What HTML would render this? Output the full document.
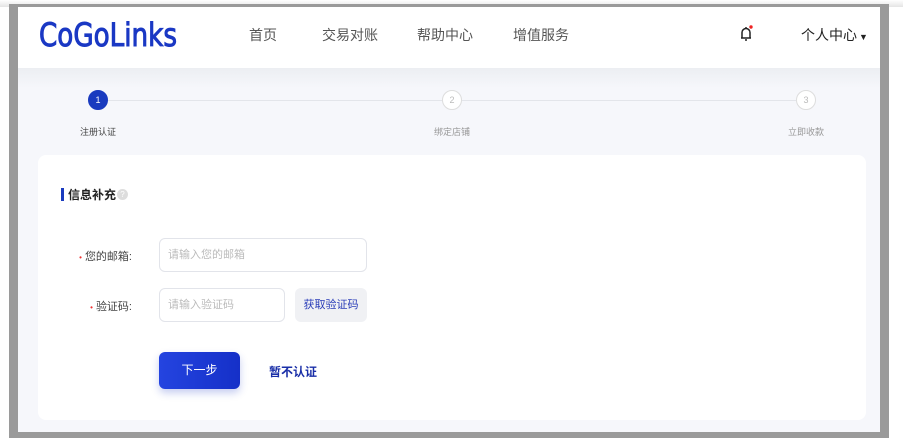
<!DOCTYPE html>
<html><head><meta charset="utf-8"><style>
*{margin:0;padding:0;box-sizing:border-box}
body{width:903px;height:442px;background:#fff;position:relative;overflow:hidden;font-family:"Liberation Sans","Noto Sans CJK SC",sans-serif}
.frame{position:absolute;left:9px;top:4px;width:880px;height:434px;background:#9a9a9a;}
.top{position:absolute;left:0;top:0;width:903px;height:7px;background:linear-gradient(#fff,#e4e4e4)}
.page{position:absolute;left:18px;top:7px;width:862px;height:425px;background:#f6f7fb;overflow:hidden}
.hdr{position:absolute;left:0;top:0;width:862px;height:61px;background:#fff}
.nav{position:absolute;top:18px;font-size:14px;color:#555}
.step{position:absolute;top:83px;width:20px;height:20px;border-radius:50%;font-size:9px;text-align:center;line-height:18px}
.lab{position:absolute;top:118px;font-size:9px;color:#999;width:80px;text-align:center}
.line{position:absolute;top:93px;height:1px;background:#e3e5ea}
.card{position:absolute;left:20px;top:148px;width:828px;height:265px;background:#fff;border-radius:8px}
.inp{position:absolute;border:1px solid #e2e4ea;border-radius:6px;background:#fff;font-size:11px;color:#bbb;padding-left:8px;line-height:32px;height:34px}
.fl{position:absolute;font-size:11px;color:#444;text-align:right;width:80px}
.fl b{color:#e33;font-weight:normal;font-size:8px;margin-right:3px}
</style></head><body>
<div class="top"></div>
<div class="frame"></div>
<div class="page">
 <div class="hdr">
  <svg style="position:absolute;left:20px;top:9px" width="142" height="36"><text x="1" y="30" font-family="DejaVu Sans" font-size="32" fill="#1a38c4" stroke="#1a38c4" stroke-width="1" textLength="138" lengthAdjust="spacingAndGlyphs">CoGoLinks</text></svg>
  <div class="nav" style="left:231px">首页</div>
  <div class="nav" style="left:304px">交易对账</div>
  <div class="nav" style="left:399px">帮助中心</div>
  <div class="nav" style="left:495px">增值服务</div>
  <svg style="position:absolute;left:721px;top:18px" width="14" height="17" viewBox="0 0 14 17"><path d="M3 13V7.5a4 4 0 0 1 8 0V13M2 13h10M7 3.5V2M6 15h2" stroke="#222" stroke-width="1.5" fill="none"/><circle cx="12" cy="2" r="1.7" fill="#e22"/></svg>
  <div class="nav" style="left:783px;color:#222">个人中心<span style="font-size:9px;margin-left:2px">▼</span></div>
 </div>
 <div style="position:absolute;left:0;top:61px;width:862px;height:20px;background:linear-gradient(#eceef2,#f6f7fb)"></div>
 <div class="line" style="left:90px;width:334px"></div>
 <div class="line" style="left:444px;width:334px"></div>
 <div class="step" style="left:70px;background:#1a3bbf;color:#fff;border:1px solid #1a3bbf">1</div>
 <div class="step" style="left:424px;background:#fff;color:#bbb;border:1px solid #ddd">2</div>
 <div class="step" style="left:778px;background:#fff;color:#bbb;border:1px solid #ddd">3</div>
 <div class="lab" style="left:40px;color:#444">注册认证</div>
 <div class="lab" style="left:394px">绑定店铺</div>
 <div class="lab" style="left:748px">立即收款</div>
 <div class="card">
  <div style="position:absolute;left:23px;top:33px;width:3px;height:13px;background:#1a3bbf"></div>
  <div style="position:absolute;left:30px;top:31px;font-size:12px;font-weight:bold;color:#222">信息补充</div>
  <div style="position:absolute;left:79px;top:34px;width:11px;height:11px;border-radius:50%;background:#ddd;color:#fff;font-size:8px;text-align:center;line-height:11px">?</div>
  <div class="fl" style="left:14px;top:93px"><b>•</b>您的邮箱:</div>
  <div class="inp" style="left:121px;top:83px;width:208px">请输入您的邮箱</div>
  <div class="fl" style="left:14px;top:143px"><b>•</b>验证码:</div>
  <div class="inp" style="left:121px;top:133px;width:126px">请输入验证码</div>
  <div style="position:absolute;left:257px;top:133px;width:72px;height:34px;border-radius:6px;background:#f0f1f4;color:#2a3db8;font-size:11px;text-align:center;line-height:34px">获取验证码</div>
  <div style="position:absolute;left:121px;top:197px;width:81px;height:37px;border-radius:6px;background:linear-gradient(90deg,#2444e0,#1530c8);color:#fff;font-size:12px;text-align:center;line-height:37px;box-shadow:0 4px 8px rgba(30,60,200,.25)">下一步</div>
  <div style="position:absolute;left:231px;top:208px;font-size:12px;font-weight:bold;color:#1a2fa8">暂不认证</div>
 </div>
</div>
</body></html>
